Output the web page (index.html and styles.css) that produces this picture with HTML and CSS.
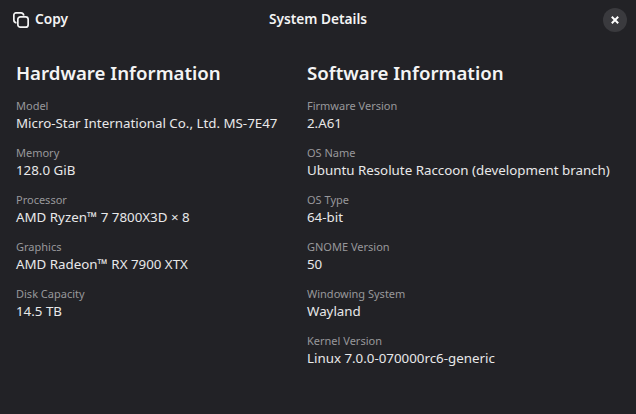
FILE: index.html
```html
<!DOCTYPE html>
<html lang="en">

<head>
    <meta charset="UTF-8">
    <title>System Details</title>
    <link rel="stylesheet" href="styles.css">
</head>

<body>
    <div class="dialog">
        <header class="headerbar">
            <button class="copy-button">
                <svg class="copy-icon" width="16" height="16" viewBox="0 0 16 16" fill="none" stroke="currentColor" stroke-width="1.7">
                    <path d="M10.8 3.6C10.6 1.9 9.5.85 8 .85H3A2.15 2.15 0 0 0 .85 3v5c0 1.5 1 2.6 2.6 2.85" />
                    <rect x="4.85" y="4.85" width="10.3" height="10.3" rx="2.5" />
                </svg>
                <span class="header-text">Copy</span>
            </button>
            <h1 class="title header-text">System Details</h1>
            <button class="close-button" aria-label="Close">
                <svg width="16" height="16" viewBox="0 0 16 16" fill="none" stroke="currentColor" stroke-width="2">
                    <path d="M4.8 4.8l6.4 6.4M11.2 4.8l-6.4 6.4" />
                </svg>
            </button>
        </header>

        <main class="columns">
            <section class="column">
                <h2>Hardware Information</h2>
                <div class="row"><div class="label">Model</div><div class="value">Micro-Star International Co., Ltd. MS-7E47</div></div>
                <div class="row"><div class="label">Memory</div><div class="value">128.0 GiB</div></div>
                <div class="row"><div class="label">Processor</div><div class="value">AMD Ryzen™ 7 7800X3D × 8</div></div>
                <div class="row"><div class="label">Graphics</div><div class="value">AMD Radeon™ RX 7900 XTX</div></div>
                <div class="row"><div class="label">Disk Capacity</div><div class="value">14.5 TB</div></div>
            </section>
            <section class="column">
                <h2>Software Information</h2>
                <div class="row"><div class="label">Firmware Version</div><div class="value">2.A61</div></div>
                <div class="row"><div class="label">OS Name</div><div class="value">Ubuntu Resolute Raccoon (development branch)</div></div>
                <div class="row"><div class="label">OS Type</div><div class="value">64-bit</div></div>
                <div class="row"><div class="label">GNOME Version</div><div class="value">50</div></div>
                <div class="row"><div class="label">Windowing System</div><div class="value">Wayland</div></div>
                <div class="row"><div class="label">Kernel Version</div><div class="value">Linux 7.0.0-070000rc6-generic</div></div>
            </section>
        </main>
    </div>
</body>

</html>
```

FILE: styles.css
```css
body {
    margin: 0;
    background-color: #222226;
    color: #fff;
    font-family: "Noto Sans", sans-serif;
}

.dialog {
    width: 636px;
    height: 414px;
    overflow: hidden;
}

.headerbar {
    display: grid;
    grid-template-columns: 1fr auto 1fr;
    align-items: center;
    height: 39px;
    padding: 0 9px;
}

.header-text {
    padding-bottom: 3px;
    font-size: 13.7px;
    font-weight: 600;
}

.copy-button {
    display: flex;
    align-items: center;
    justify-self: start;
    gap: 6px;
    margin-left: 4px;
    padding: 0;
    border: none;
    background: none;
    color: #f4f4f4;
    font-family: "Noto Sans", sans-serif;
}

.title {
    margin: 0;
    color: #f4f4f4;
}

.close-button {
    display: flex;
    align-items: center;
    justify-content: center;
    justify-self: end;
    width: 24px;
    height: 24px;
    padding: 0;
    border: none;
    border-radius: 50%;
    background-color: #3a3a3e;
    color: #fff;
}

.columns {
    display: flex;
    padding: 21px 16px 0;
}

.column {
    width: 291px;
    flex-shrink: 0;
}

.column h2 {
    margin: 0 0 13px;
    font-size: 18.67px;
    font-weight: 600;
    line-height: 25px;
    color: #f4f4f4;
}

.row {
    margin-bottom: 11px;
}

.label {
    font-size: 11px;
    line-height: 15px;
    color: #98989b;
}

.value {
    font-size: 13.33px;
    line-height: 21px;
    color: #e8e8e9;
    white-space: nowrap;
}
```
